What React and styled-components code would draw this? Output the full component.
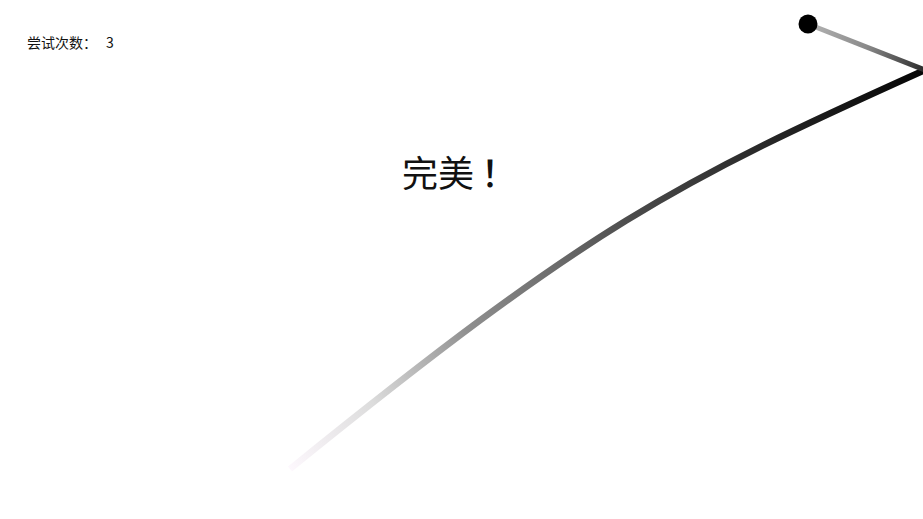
import React from 'react'
import styled, {createGlobalStyle} from 'styled-components'

const GlobalStyle = createGlobalStyle`
  html, body {
    margin: 0;
    padding: 0;
    background: #ffffff;
  }
  body {
    font-family: "Noto Sans CJK SC", "Noto Sans", sans-serif;
    color: #111111;
    overflow: hidden;
  }
`

// last throw: rope trail from where it started to the anchor off the right edge
const trailPath = 'M 290 469 C 590 226 675 182.5 925 70'

class App extends React.Component {
  render() {
    return (
      <Stage>
        <GlobalStyle />
        <Canvas viewBox="0 0 923 519" width="923" height="519">
          <defs>
            <linearGradient id="trailFade" gradientUnits="userSpaceOnUse" x1="290" y1="469" x2="925" y2="70">
              <stop offset="0" stopColor="#fdf8fd" />
              <stop offset="0.14" stopColor="#dcdcdc" />
              <stop offset="0.3" stopColor="#8f8f8f" />
              <stop offset="0.45" stopColor="#6a6a6a" />
              <stop offset="0.57" stopColor="#4a4a4a" />
              <stop offset="0.8" stopColor="#222222" />
              <stop offset="1" stopColor="#050505" />
            </linearGradient>
            <linearGradient id="ropeFade" gradientUnits="userSpaceOnUse" x1="808" y1="24" x2="925" y2="70">
              <stop offset="0" stopColor="#b4b4b4" />
              <stop offset="0.5" stopColor="#8a8a8a" />
              <stop offset="1" stopColor="#2a2a2a" />
            </linearGradient>
          </defs>
          <path d={trailPath} fill="none" stroke="url(#trailFade)" strokeWidth="6.5" />
          <line x1="808" y1="24" x2="925" y2="70" stroke="url(#ropeFade)" strokeWidth="5" />
          <circle cx="808" cy="24" r="9.5" fill="#000" />
        </Canvas>

        <Hud>
          <Attempts>尝试次数：<Count>3</Count></Attempts>
        </Hud>
        <Message>
          <Verdict>完美<Bang>！</Bang></Verdict>
        </Message>
      </Stage>
    )
  }
}

const Stage = styled.main`
  position: relative;
  width: 923px;
  height: 519px;
  display: flex;
  flex-direction: column;
  background: #ffffff;
`

const Canvas = styled.svg`
  position: absolute;
  top: 0;
  left: 0;
  display: block;
`

const Hud = styled.header`
  position: relative;
  display: flex;
  align-items: center;
  padding: 31px 0 0 27px;
`

const Attempts = styled.span`
  font-size: 14px;
  line-height: 22px;
  color: #111111;
`

const Count = styled.span`
  margin-left: 9px;
`

const Message = styled.section`
  position: relative;
  display: flex;
  justify-content: center;
  padding: 94px 4px 0 0;
`

const Verdict = styled.h1`
  margin: 0;
  font-size: 36px;
  font-weight: 400;
  line-height: 48px;
  color: #111111;
`

const Bang = styled.span`
  margin-left: 7px;
  font-weight: 500;
`

export default App
